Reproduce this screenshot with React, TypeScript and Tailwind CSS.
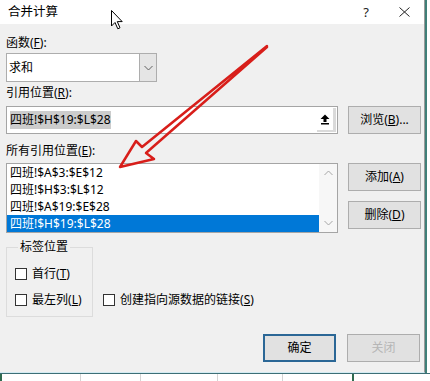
import React from "react";

const font = { fontFamily: '"Noto Sans", "Noto Sans CJK SC", sans-serif' };

function Checkbox({ label, u, rest }: { label: string; u: string; rest?: string }) {
  return (
    <div className="flex h-[16px] items-center">
      <div className="h-[12px] w-[12px] border border-[#333333] bg-white" />
      <span className="ml-[5px] text-[12px] leading-[16px] text-black">
        {label}(<u>{u}</u>){rest}
      </span>
    </div>
  );
}

function Btn({ children, focus, dim }: { children: React.ReactNode; focus?: boolean; dim?: boolean }) {
  return (
    <div
      className={
        "flex h-[28px] w-[73px] items-center justify-center bg-[#e1e1e1] text-[12px] leading-[16px] " +
        (focus ? "border-2 border-[#2b6796] " : "border border-[#adadad] ") +
        (dim ? "text-[#b5b5b5]" : "text-black")
      }
    >
      {children}
    </div>
  );
}

function Chevron({ up, color }: { up?: boolean; color: string }) {
  return (
    <svg width="9" height="6" viewBox="0 0 9 6">
      <path d={up ? "M0.5 5 L4.5 1 L8.5 5" : "M0.5 1 L4.5 5 L8.5 1"} fill="none" stroke={color} strokeWidth="1" />
    </svg>
  );
}

export default function App() {
  const rows = ["四班!$A$3:$E$12", "四班!$H$3:$L$12", "四班!$A$19:$E$28", "四班!$H$19:$L$28"];
  return (
    <div className="relative flex h-[381px] w-[430px] flex-col overflow-hidden bg-white" style={font}>
      <div className="flex h-[373px]">
        {/* dialog */}
        <div className="flex w-[425px] flex-col border-r border-b border-r-[#9a9a9a] border-b-[#d3ebf2]">
          {/* title bar */}
          <div className="flex h-[24px] items-center bg-white pl-[8px] pr-[14px]">
            <span className="text-[12.5px] leading-[16px] text-black">合并计算</span>
            <span className="ml-auto text-[13px] leading-[16px] text-[#222]">?</span>
            <svg className="ml-[30px]" width="11" height="10" viewBox="0 0 11 10">
              <path d="M0.5 0.5 L10.5 9.5 M10.5 0.5 L0.5 9.5" stroke="#222" strokeWidth="1" />
            </svg>
          </div>
          {/* body */}
          <div className="flex flex-1 flex-col bg-[#f0f0f0] pl-[6px] pr-[3px]">
            <div className="mt-[11px] h-[16px] text-[12px] leading-[16px] text-black">
              函数(<u>F</u>):
            </div>
            <div className="mt-[2px] flex h-[29px] w-[151px] border border-[#adadad] bg-white">
              <div className="flex flex-1 items-center pl-[2px] text-[12px] leading-[16px] text-black">求和</div>
              <div className="flex w-[17px] items-center justify-center border-l border-[#adadad] bg-[#e5e5e5]">
                <Chevron color="#606060" />
              </div>
            </div>
            <div className="mt-[3px] h-[16px] text-[12px] leading-[16px] text-black">
              引用位置(<u>R</u>):
            </div>
            <div className="mt-[5px] flex items-center">
              <div className="flex h-[28px] w-[332px] items-center border border-[#a5a5a5] bg-white">
                <div className="ml-[3px] bg-[#cccccc] text-[12px] leading-[18px] text-black">四班!$H$19:$L$28</div>
                <div className="ml-auto mr-[1px] flex h-[24px] w-[19px] items-stretch bg-[#dadada] pb-[2px] pr-[3px]">
                  <div className="flex flex-1 items-center justify-center bg-white">
                    <svg width="10" height="11" viewBox="0 0 10 11">
                      <path d="M5 0.5 L9.5 5 L6.5 5 L6.5 8 L3.5 8 L3.5 5 L0.5 5 Z" fill="#000" />
                      <rect x="1" y="9" width="8" height="1.5" fill="#000" />
                    </svg>
                  </div>
                </div>
              </div>
              <div className="ml-[10px]">
                <Btn>
                  浏览(<u>B</u>)...
                </Btn>
              </div>
            </div>
            <div className="mt-[9px] h-[16px] text-[12px] leading-[16px] text-black">
              所有引用位置(<u>E</u>):
            </div>
            <div className="mt-[4px] flex items-start">
              <div className="flex h-[70px] w-[332px] border border-[#a5a5a5] bg-white">
                <div className="flex flex-1 flex-col">
                  {rows.map((r, i) => (
                    <div
                      key={r}
                      className={
                        "h-[17px] pl-[3px] text-[12px] leading-[17px] " +
                        (i === 3 ? "bg-[#0078d7] text-white" : "text-black")
                      }
                    >
                      {r}
                    </div>
                  ))}
                </div>
                <div className="flex w-[18px] flex-col items-center justify-between bg-[#f7f7f7] py-[6px]">
                  <Chevron up color="#a6a6a6" />
                  <Chevron color="#a6a6a6" />
                </div>
              </div>
              <div className="ml-[10px] flex flex-col gap-[10px]">
                <Btn>
                  添加(<u>A</u>)
                </Btn>
                <Btn>
                  删除(<u>D</u>)
                </Btn>
              </div>
            </div>
            <div className="mt-[6px] flex items-start">
              <fieldset className="w-[87px] border border-[#dcdcdc] pb-[8px] pl-[8px]">
                <legend className="ml-[3px] px-[2px] text-[12px] leading-[16px] text-black">标签位置</legend>
                <div className="mt-[11px] flex flex-col gap-[10px]">
                  <Checkbox label="首行" u="T" />
                  <Checkbox label="最左列" u="L" />
                </div>
              </fieldset>
              <div className="ml-[10px] mt-[53px]">
                <Checkbox label="创建指向源数据的链接" u="S" />
              </div>
            </div>
            <div className="mt-[17px] flex justify-end gap-[11px] pr-[1px]">
              <Btn focus>确定</Btn>
              <Btn dim>关闭</Btn>
            </div>
          </div>
        </div>
        {/* spreadsheet right strip */}
        <div className="flex-1 border-l-2 border-[#3f7f78] bg-white" />
      </div>
      {/* spreadsheet bottom strip */}
      <div className="flex flex-1 border-t border-[#3d6f76] bg-white">
        <div className="w-[81px] border-l-2 border-r border-l-[#2f6b4f] border-r-[#d4d4d4]" />
        <div className="w-[60px] border-r border-[#d4d4d4]" />
        <div className="w-[77px] border-r border-[#d4d4d4]" />
        <div className="w-[65px] border-r border-[#d4d4d4]" />
        <div className="w-[71px] border-r-2 border-[#2f6b4f]" />
        <div className="flex-1" />
      </div>

      {/* red annotation arrow */}
      <svg className="pointer-events-none absolute left-0 top-0" width="430" height="381" viewBox="0 0 430 381">
        <path
          d="M267 46 L142 147 L136 141 L120 167 L154 159 L146 153 L267 47"
          fill="none"
          stroke="#d81e1a"
          strokeWidth="2.5"
          strokeLinejoin="round"
          strokeLinecap="round"
        />
      </svg>
      {/* mouse cursor */}
      <svg className="pointer-events-none absolute left-[111px] top-[10px]" width="13" height="20" viewBox="0 0 13 20">
        <path d="M0.5 0.5 L0.5 16 L4 12.5 L6.8 18.8 L9 17.8 L6.3 11.6 L11.2 11.6 Z" fill="#fff" stroke="#000" strokeWidth="1" />
      </svg>
    </div>
  );
}
